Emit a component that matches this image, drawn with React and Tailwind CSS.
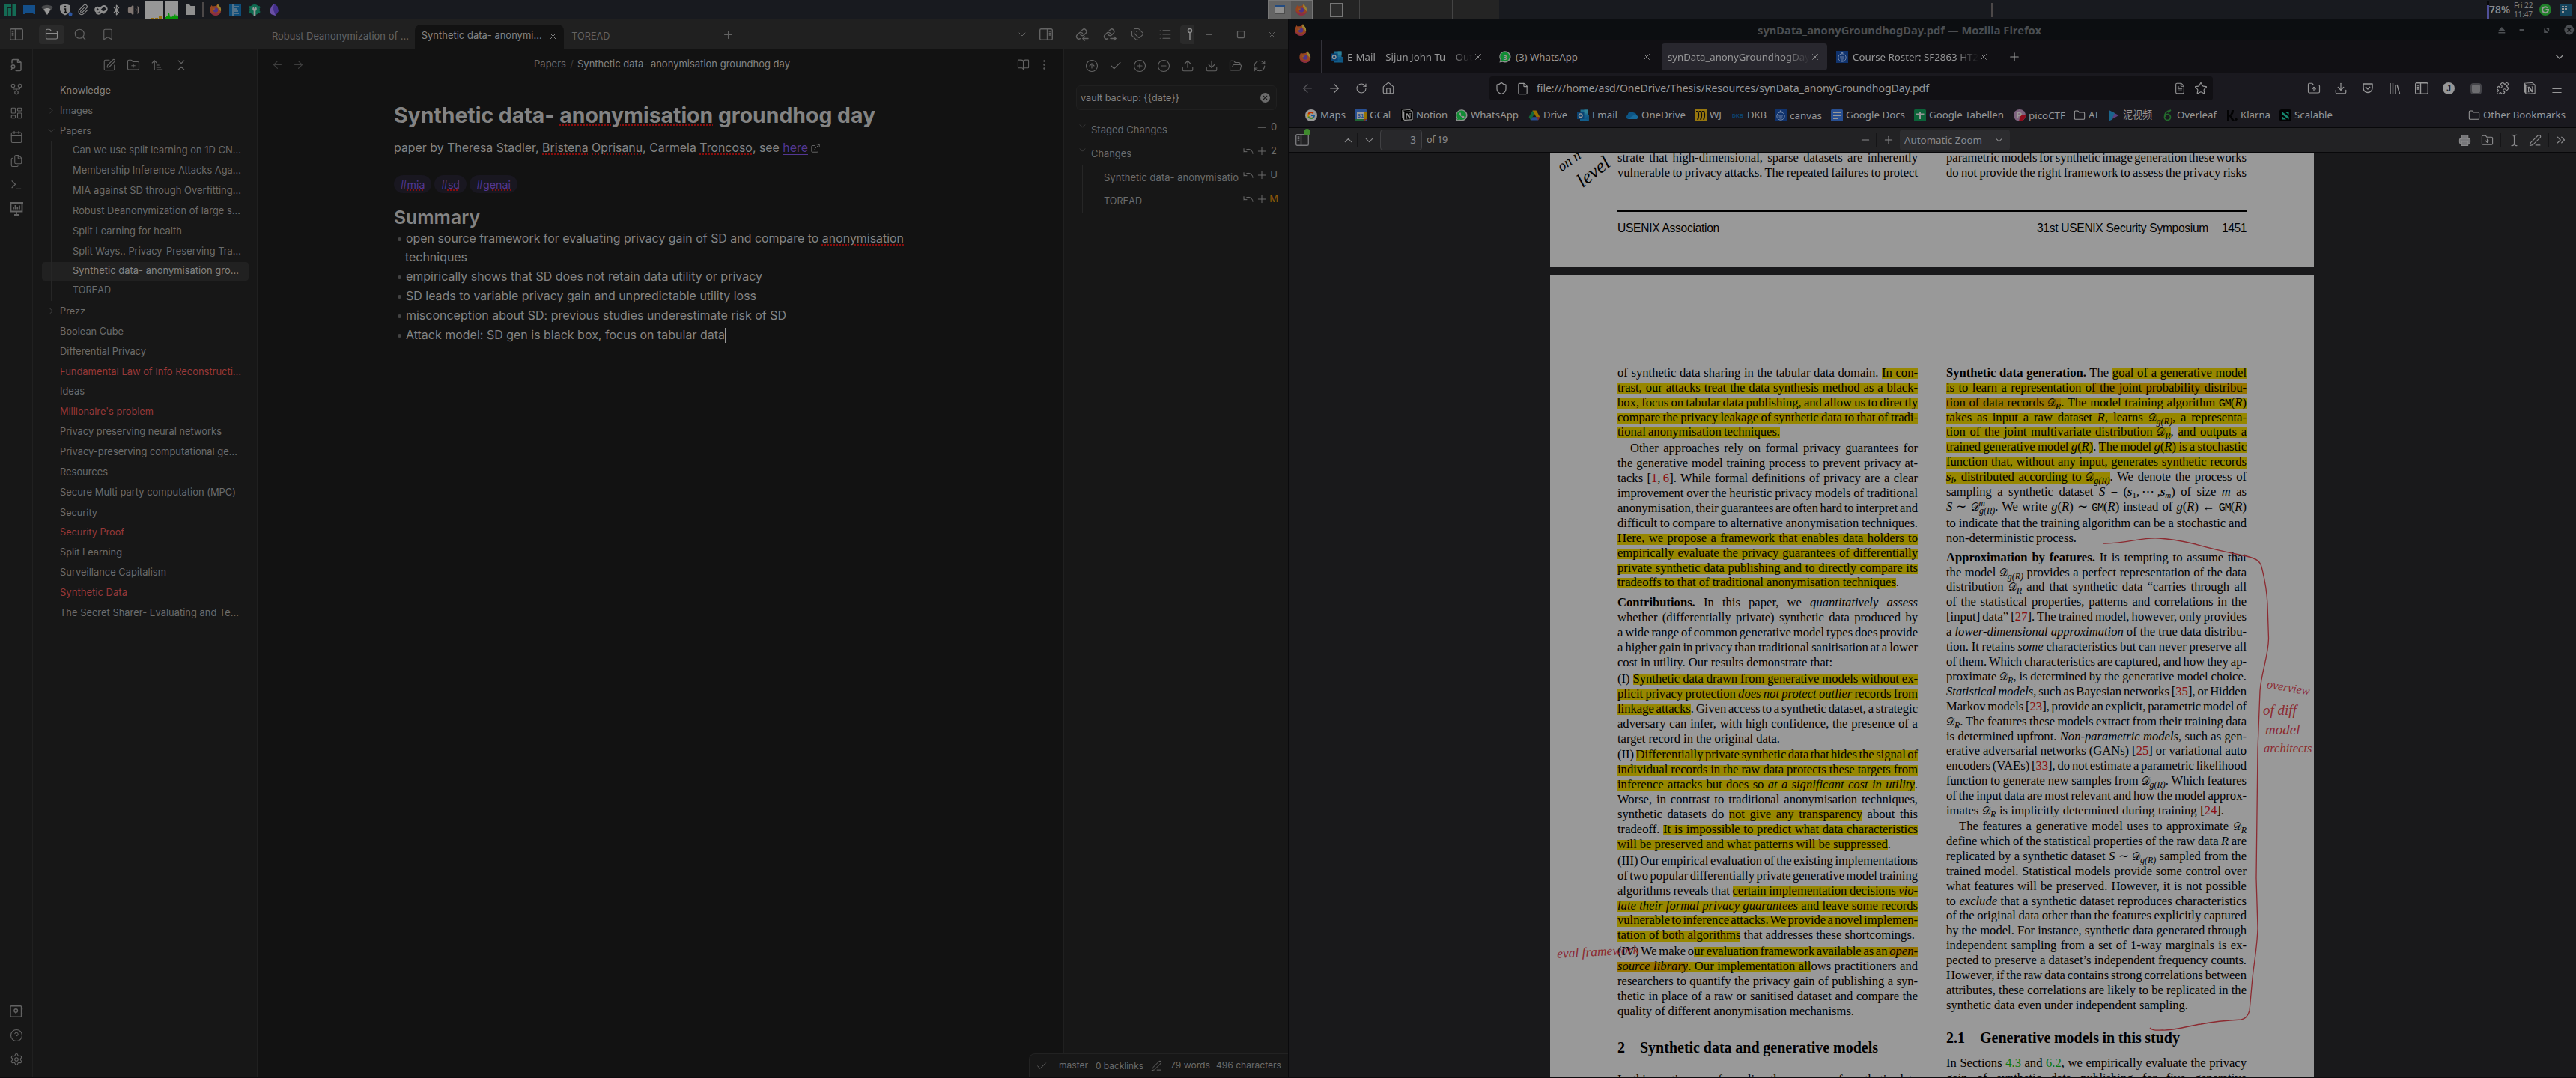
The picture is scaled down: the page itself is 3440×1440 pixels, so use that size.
import React, { useLayoutEffect, useRef } from "react";
import {
  FolderOpen, FolderClosed, Search, Bookmark, GitFork, LayoutDashboard, Calendar, Files,
  SquarePen, FolderPlus, ArrowUpNarrowWide, ChevronsDownUp, ChevronRight, ChevronDown, ChevronUp, X, Plus, Minus,
  ArrowLeft, ArrowRight, BookOpen, Tags, List, CircleArrowUp, Check, CirclePlus, CircleMinus,
  Upload, Download, RefreshCw, ExternalLink, Undo, CircleQuestionMark, Settings, PenLine,
  RotateCw, House, Shield, File, FileText, Star, Puzzle, Menu, Folder, Printer, TextCursor,
  ChevronsRight, Bluetooth, Paperclip, Volume2, Square, EllipsisVertical, Terminal,
  FolderUp, FolderDown,
} from "lucide-react";
import { FcGoogle } from "react-icons/fc";
import { SiNotion } from "react-icons/si";

/* Text set to an exact width: by size first, then by letter or word spacing. */
function Fit({ w, words = false, className = "", children }) {
  const ref = useRef(null);
  useLayoutEffect(() => {
    const el = ref.current;
    el.style.letterSpacing = "";
    el.style.wordSpacing = "";
    el.style.fontSize = "";
    if (!w) return;
    let natural = el.getBoundingClientRect().width;
    if (!words) {
      const k = Math.min(1.06, Math.max(0.94, w / natural));
      el.style.fontSize = parseFloat(getComputedStyle(el).fontSize) * k + "px";
      natural = el.getBoundingClientRect().width;
    }
    const text = el.textContent;
    const n = words ? text.split(" ").length - 1 : text.length;
    if (n > 0) el.style[words ? "wordSpacing" : "letterSpacing"] = (w - natural) / n + "px";
  }, [w, words]);
  return <span ref={ref} className={"inline-block whitespace-nowrap " + className}>{children}</span>;
}

const Slot = ({ className = "w-8", children }) => (
  <div className={"flex shrink-0 items-center justify-center " + className}>{children}</div>
);

/* ---------- small colour icons ---------- */

const FirefoxIcon = () => (
  <svg width="16" height="16" viewBox="0 0 16 16">
    <path d="M1.2 4.5 2.4 2l1.4 1.5L6 3.2 8.5 3 11 .2c.3 1.6 2 2.600 3 4.300 1.200 2 1.500 4.500.6 6.700A7.300 7.300 0 0 1 8 15.800C4 15.800.6 12.700.4 8.800.3 7.200.6 5.800 1.200 4.500Z" fill="#97441f" />
    <path d="M.5 9.500c.4 3.600 3.600 6.300 7.500 6.300 3.800 0 6.400-2.300 7.200-5.500-1.300 2-3.300 3-5.700 3C5.500 13.300 2 12 .5 9.500Z" fill="#8c2c44" />
    <path d="M11 .2c.3 1.600 2 2.600 3 4.300 1.200 2 1.500 4 .8 6.200-.6-2-1.700-3.300-3.800-5C9.600 4.300 9.800 2 11 .2Z" fill="#998433" />
    <circle cx="8" cy="8.600" r="3.200" fill="#4f3487" />
    <path d="M3.800 6.300 7.800 6.500 6 8.300 4.200 8.200Z" fill="#99591f" />
  </svg>
);
const OutlookIcon = () => (
  <svg width="16" height="16" viewBox="0 0 16 16">
    <rect x="4.500" y="0.500" width="10" height="10" fill="#1d6d8f" />
    <rect x="9.500" y="0.500" width="5" height="5" fill="#2f8098" />
    <path d="M4 8h12v7.500H4z" fill="#135e8c" /><path d="m4 8 6 4 6-4v7.500z" fill="#0f5580" />
    <rect x="0" y="3.500" width="9.500" height="9.500" fill="#0a4373" />
    <circle cx="4.700" cy="8.200" r="2.300" fill="none" stroke="#999" strokeWidth="1.400" />
  </svg>
);
const WaIcon = ({ n }) => (
  <svg width="16" height="16" viewBox="0 0 16 16">
    <path d="M.4 15.600 1.500 12A7.600 7.600 0 1 1 4.500 14.700Z" fill="#8f918f" />
    <path d="M1.900 14.200 2.700 11.700A6.300 6.300 0 1 1 5 13.500Z" fill="#118c33" />
    {n ? <text x="8" y="11.500" fontSize="9" fontWeight="700" textAnchor="middle" fill="#999" fontFamily="Noto Sans">3</text>
      : <path d="M5.500 4.500c-1 1-.5 3 1.300 4.700 1.700 1.800 3.800 2.300 4.700 1.200.3-.6.1-1-1.700-1.700l-.9.900C7.700 9.200 6.900 8.300 6.500 7.300l.7-.9C6.700 4.500 6.200 4 5.500 4.500Z" fill="#999" />}
  </svg>
);
const GIcon = () => (
  <span className="flex size-4 items-center justify-center rounded-full bg-[#989898]"><FcGoogle size={12} className="brightness-75" /></span>
);
const GCalIcon = () => (
  <svg width="16" height="16" viewBox="0 0 16 16">
    <rect width="16" height="16" rx="1" fill="#284f92" /><path d="M13 3h3v10h-3z" fill="#977102" /><path d="M0 13h13v3H1a1 1 0 0 1-1-1z" fill="#1f6533" />
    <path d="M13 13h3l-3 3z" fill="#8c2820" /><rect x="3" y="3" width="10" height="10" fill="#989898" />
    <text x="8" y="11" fontSize="8" fontWeight="700" textAnchor="middle" fill="#284f92" fontFamily="Liberation Sans">31</text>
  </svg>
);
const NotionIcon = () => (
  <span className="flex size-4 items-center justify-center bg-black"><SiNotion size={15} color="#989898" /></span>
);
const DriveIcon = () => (
  <svg width="16" height="16" viewBox="0 0 16 16">
    <path d="M5.500 1.500 8 6 3 14.500.6 10.200z" fill="#14663a" /><path d="M5.500 1.500h5L15.500 10.200h-5z" fill="#997000" />
    <path d="M5.500 10.200h10L13 14.500H3z" fill="#284f92" /><path d="M11 10.200h4.500L13 14.500z" fill="#8c2820" />
  </svg>
);
const CloudIcon = () => (
  <svg width="16" height="16" viewBox="0 0 16 16"><path d="M2 13a3 3 0 0 1-.5-5.500A5 5 0 0 1 10 4.500 4 4 0 0 1 13.500 8 2.600 2.600 0 0 1 13.500 13z" fill="#0d5585" /><path d="M2 13 10 7.500 13.500 8a2.600 2.600 0 0 1 0 5z" fill="#17699a" /></svg>
);
const WjIcon = () => (
  <svg width="16" height="16" viewBox="0 0 16 16"><rect width="16" height="16" fill="#97770f" /><path d="M2 3h2.500c1 3 1 7-.5 11M6 3h2.500c1 3 1 7-.5 11M10 3h2.500c1 3 1 7-.5 11" fill="none" stroke="#0b0b10" strokeWidth="1.800" /></svg>
);
const DkbIcon = () => (
  <svg width="16" height="16" viewBox="0 0 16 16"><text x="0" y="10.500" fontSize="7" fontWeight="700" textLength="15" fill="#0b4472" fontFamily="Liberation Sans">DKB</text></svg>
);
const KthIcon = () => (
  <svg width="16" height="16" viewBox="0 0 16 16"><rect width="16" height="16" fill="#10336e" /><circle cx="8" cy="9" r="5.200" fill="none" stroke="#7286a8" /><circle cx="8" cy="2.500" r="1.300" fill="#7286a8" /><path d="M5 8h6M5.500 10h5M6.500 12h3" stroke="#7286a8" /></svg>
);
const DocsIcon = () => (
  <svg width="16" height="16" viewBox="0 0 16 16"><rect width="16" height="16" rx="1.500" fill="#284f92" /><path d="M3 4h10M3 8h10M3 12h6" stroke="#989898" strokeWidth="1.800" /></svg>
);
const SheetsIcon = () => (
  <svg width="16" height="16" viewBox="0 0 16 16"><rect width="16" height="16" rx="1.500" fill="#0b6339" /><path d="M2.500 6.500h11M8 3v10" stroke="#989898" strokeWidth="2" /></svg>
);
const PicoIcon = () => (
  <svg width="16" height="16" viewBox="0 0 16 16"><circle cx="8" cy="8" r="8" fill="#7f6480" /><path d="M9 8h7a8 8 0 0 1-9 8z" fill="#8f0d1e" /><text x="7.500" y="12" fontSize="11" fontWeight="700" textAnchor="middle" fill="#999" fontFamily="Liberation Sans">P</text></svg>
);
const PlayIcon = () => (
  <svg width="16" height="16" viewBox="0 0 16 16"><path d="M2 1.500 14.500 8 2 15z" fill="#5a3e7d" /><path d="M2 1.500 9 5 5 14 2 15z" fill="#19658c" /></svg>
);
const LeafIcon = () => (
  <svg width="16" height="16" viewBox="0 0 16 16"><path d="M12 1C6 2 3.500 6 3.500 10.500a4 4 0 1 0 3.500-4C5 7 4 9 4 10M8 4l4-3" fill="none" stroke="#236b2c" strokeWidth="1.700" /></svg>
);
const KlarnaIcon = () => (
  <svg width="16" height="16" viewBox="0 0 16 16"><path d="M2 1h3v14H2zM8 1h3c0 4-1.500 6-3.500 7.500L12 15H8.500L4.500 8.500C7 7 8 4 8 1z" fill="#030304" /><circle cx="14" cy="13.200" r="1.700" fill="#030304" /></svg>
);
const ScalableIcon = () => (
  <svg width="16" height="16" viewBox="0 0 16 16"><rect width="16" height="16" rx="3" fill="#020203" /><path d="M3.500 3 12.500 10v3.500L3.500 6.500zM7 3h5.500v4zM3.500 9.500 9 13.500H3.500z" fill="#17876f" /></svg>
);

/* ---------- desktop panel ---------- */

const Panel = () => (
  <div className="flex h-[26px] w-full bg-[#181a1f]">
    <div className="flex h-full w-[1693px] items-center">
      <Slot className="w-[26px]">
        <svg width="16" height="16" viewBox="0 0 16 16"><path d="M0 0h10v4.500H4.500V16H0zM5.700 6H10v10H5.700zM11.500 0H16v16h-4.500z" fill="#146b55" /></svg>
      </Slot>
      <Slot className="w-[26px]">
        <svg width="16" height="16" viewBox="0 0 16 16"><path d="M0 2h16v12h-2l-2-2H4l-2 2H0z" fill="#144f8a" /></svg>
      </Slot>
      <Slot className="w-[22px]">
        <svg width="16" height="16" viewBox="0 0 16 16"><path d="M0 4.500C4.500.8 11.500.8 16 4.500L8 15z" fill="#48494b" /><path d="M3.500 7.500C6 5.500 10 5.500 12.500 7.500L8 15z" fill="#999" /></svg>
      </Slot>
      <Slot className="w-[27px]">
        <svg width="18" height="18" viewBox="0 0 18 18"><path d="M8 1 15 3.500V8c0 4-3 7-7 8.500C4 15 1 12 1 8V3.500z" fill="#8e8e8e" /><circle cx="8" cy="5" r="1.300" fill="#111" /><path d="M6.500 8H8.500v4.500M6.500 12.500h4" stroke="#111" strokeWidth="1.500" fill="none" /><circle cx="15" cy="15" r="2.500" fill="#2d56a0" /></svg>
      </Slot>
      <Slot className="w-[20px]"><Paperclip size={16} strokeWidth={1.600} color="#8e8e8e" /></Slot>
      <Slot className="w-[27px]">
        <svg width="19" height="14" viewBox="0 0 19 14"><path d="M14 10c3-.5 4-3 3-5.500C15.500 1 12.500 2 10.500 4L7 8.500C5.500 10.500 2.500 10 2.500 7S6 3 7.500 5.500C9 8 11 12 14 11M4 11.500c3 2 5 .5 7-2" fill="none" stroke="#8e8e8e" strokeWidth="2.600" strokeLinecap="round" /></svg>
      </Slot>
      <Slot className="w-[15px]"><Bluetooth size={17} strokeWidth={2.200} color="#8e8e8e" /></Slot>
      <Slot className="w-[31px]"><Volume2 size={17} strokeWidth={1.600} color="#807672" fill="#807672" /></Slot>
      <div className="flex h-6 w-6 items-end justify-end gap-px bg-[#979797]"><i className="h-px w-1 bg-[#97700d]" /><i className="h-px w-1 bg-[#97700d]" /><i className="h-[3px] w-1 bg-[#97700d]" /><i className="h-px w-px" /></div>
      <div className="ml-[2px] h-6 w-[18px] bg-[#979797]">
        <svg width="18" height="24" viewBox="0 0 18 24"><path d="M0 24v-2h2v-1h2l1-4 1-.500 1 5h3l1-2 1 2 2-4 1 4 1-3 1 3 1-2v4.500z" fill="#079a07" /></svg>
      </div>
      <Slot className="w-[32px]">
        <svg width="15" height="14" viewBox="0 0 15 14"><path d="M1 0h5l1.500 2H14v12H1z" fill="#8f8f8f" /></svg>
      </Slot>
      <div className="h-5 w-[2px] bg-[#4c4848]" />
      <Slot className="w-[32px]"><FirefoxIcon /></Slot>
      <Slot className="w-[20px]">
        <svg width="16" height="16" viewBox="0 0 16 16"><rect width="16" height="16" fill="#0e4d7a" /><path d="M5 0v16M7 4h6M7 7h3M7 10h5M7 13h6" stroke="#999" /></svg>
      </Slot>
      <Slot className="w-[32px]">
        <svg width="16" height="16" viewBox="0 0 16 16"><circle cx="8" cy="8" r="5" fill="none" stroke="#0f6a50" strokeWidth="4" /><path d="M8 0v16M1 4l14 8M15 4 1 12" stroke="#0f6a50" strokeWidth="3" /><circle cx="8" cy="7" r="2.800" fill="#999" /><path d="M6.700 8h2.600v8H6.700z" fill="#999" /><path d="M7.200 3h1.600v3.500H7.200z" fill="#0f6a50" /></svg>
      </Slot>
      <Slot className="w-[20px]">
        <svg width="12" height="16" viewBox="0 0 12 16"><path d="M6 0 10.500 3.500 12 10 8 16 2 14 0 9.500 3 3z" fill="#44308b" /><path d="M6 0 4.500 7 8 16 2 14 0 9.500 3 3z" fill="#6a50a5" /></svg>
      </Slot>
    </div>
    <div className="flex h-full w-[60px] items-center border border-[#777] bg-[#646464]">
      <Slot className="w-[30px]"><svg width="14" height="12"><rect x=".5" y=".5" width="13" height="11" fill="#8e8e8e" stroke="#4d4d4d" /><path d="M0 1h14" stroke="#234b80" strokeWidth="2" /></svg></Slot>
      <Slot className="h-full w-[28px] bg-[#555]"><FirefoxIcon /></Slot>
    </div>
    <div className="flex h-full">
      <Slot className="w-[63px] border-x border-[#444] bg-[#242424]"><div className="h-[19px] w-[17px] border border-[#777] bg-[#2c2c2c]" /></Slot>
      <div className="w-[62px] border-r border-[#444] bg-[#242424]" />
      <div className="w-[62px] border-r border-[#444] bg-[#242424]" />
      <div className="w-[62px] bg-[#242424]" />
    </div>
    <div className="flex grow items-center pl-[657px]"><div className="h-[19px] w-[2px] bg-[#4c4848]" /></div>
    <div className="flex h-full items-center pr-[5px] font-['Noto_Sans'] text-[#7d7d7d]">
      <div className="flex h-[23px] w-[3px] items-end bg-[#08080a]"><i className="h-[18px] w-[3px] bg-[#50509a]" /></div>
      <Fit w={28} className="text-[13px] font-semibold text-[#8c8c8c]">78%</Fit>
      <div className="ml-[5px] flex w-[29px] flex-col text-[10.500px] leading-[12px]"><Fit w={28}>Fri 22</Fit><Fit w={28}>11:47</Fit></div>
      <Slot className="w-[26px]"><svg width="16" height="16" viewBox="0 0 16 16"><circle cx="8" cy="8" r="8" fill="#20802a" /><path d="M11 5.500A4 4 0 1 0 12 8H8.500" fill="none" stroke="#999" strokeWidth="2" /></svg></Slot>
      <Slot className="ml-[7px] w-4"><svg width="16" height="16" viewBox="0 0 16 16"><rect width="16" height="16" fill="#15455e" /><path d="M2 3h3v2H2zM6 3h3v2H6zM2 6h3v3H2zM6 6h3v3H6zM2 10h3v3H2z" fill="#9a9a9a" /></svg></Slot>
    </div>
  </div>
);

/* ---------- notes app ---------- */

const ic = { size: 18, strokeWidth: 1.5 };
const SidebarIcon = ({ className = "" }) => (
  <svg width="18" height="16" viewBox="0 0 18 16" fill="none" stroke="currentColor" strokeWidth="1.400" className={className}><rect x=".7" y=".7" width="16.600" height="14.600" rx="1.500" /><path d="M7.500 1v14M2.700 4h2.600M2.700 6.500h2.600M2.700 9h2.600" /></svg>
);
const FileFindIcon = () => (
  <svg width="18" height="18" viewBox="0 0 24 24" fill="none" stroke="currentColor" strokeWidth="2" strokeLinecap="round" strokeLinejoin="round"><path d="M14 2v5h6M4 8V4a2 2 0 0 1 2-2h9l5 5v13a2 2 0 0 1-2 2h-7" /><circle cx="6" cy="14.500" r="3" /><path d="m3 20 1.500-3" /></svg>
);
const SlidesIcon = () => (
  <svg width="18" height="18" viewBox="0 0 18 18" fill="none" stroke="currentColor" strokeWidth="1.800"><path d="M0 1h18M1.500 1v11.500h15V1M9 12.500V17M6 17h6M5 9.500V6M7.500 9.500V4M10.300 9.500V6M13 9.500V4.500" /></svg>
);
const VaultIcon = () => (
  <svg width="18" height="16" viewBox="0 0 18 16" fill="none" stroke="currentColor" strokeWidth="1.400"><rect x="1" y=".8" width="14.500" height="14.400" rx="1" /><circle cx="8.200" cy="7" r="2.300" /><path d="M8.200 9.300v2.500M16.500 4v1.500M16.500 10.500V12" /></svg>
);
const GitPin = () => (
  <svg width="18" height="18" viewBox="0 0 18 18" fill="none" stroke="#8c8c8c" strokeWidth="1.500"><circle cx="13" cy="4" r="2.500" /><path d="M13 6.500V17" /></svg>
);
const LinkArrow = ({ out }) => (
  <svg width="18" height="18" viewBox="0 0 18 18" fill="none" stroke="currentColor" strokeWidth="1.400" strokeLinecap="round"><path d="M7 9.500a3 3 0 0 0 4.500.3l2.600-2.600a3.200 3.200 0 0 0-4.500-4.500L8.200 4M9.500 7.500A3 3 0 0 0 5 7.200L2.400 9.800a3.200 3.200 0 0 0 4 4.900M10 14.500h7" />{out ? <path d="m14.500 12 2.500 2.500-2.500 2.500" /> : <path d="M12.500 12 10 14.500l2.500 2.500" />}</svg>
);

const tree = [
  ["Knowledge", 68, "root"], ["Images", 44, "closed"], ["Papers", 42, "open"],
  ["Can we use split learning on 1D CN...", 225, "child"], ["Membership Inference Attacks Aga...", 225, "child"],
  ["MIA against SD through Overfitting...", 225, "child"], ["Robust Deanonymization of large s...", 224, "child"],
  ["Split Learning for health", 146, "child"], ["Split Ways.. Privacy-Preserving Tra...", 225, "child"],
  ["Synthetic data- anonymisation gro...", 222, "active"], ["TOREAD", 51, "child"],
  ["Prezz", 34, "closed"], ["Boolean Cube", 85, "file"], ["Differential Privacy", 115, "file"],
  ["Fundamental Law of Info Reconstructi...", 242, "red"], ["Ideas", 33, "file"], ["Millionaire's problem", 125, "red"],
  ["Privacy preserving neural networks", 216, "file"], ["Privacy-preserving computational ge...", 237, "file"],
  ["Resources", 64, "file"], ["Secure Multi party computation (MPC)", 235, "file"], ["Security", 50, "file"],
  ["Security Proof", 86, "red"], ["Split Learning", 83, "file"], ["Surveillance Capitalism", 142, "file"],
  ["Synthetic Data", 90, "red"], ["The Secret Sharer- Evaluating and Te...", 239, "file"],
];
const rowColor = { root: "text-[#838383]", red: "text-[#973838]", active: "text-[#838383]" };

function TreeRow({ label, w, kind }) {
  const child = kind === "child" || kind === "active";
  return (
    <div className="flex h-[26.85px] items-center">
      <div className={"flex h-[25px] w-[276px] items-center rounded " + (kind === "active" ? "bg-[#212121]" : "")}>
        <span className="flex h-[26.85px] w-6 items-center justify-center text-[#444]">
          {child && <i className="h-full w-px bg-[#262626]" />}
          {kind === "closed" && <ChevronRight size={13} strokeWidth={1.800} />}
          {kind === "open" && <ChevronDown size={13} strokeWidth={1.800} />}
        </span>
        <span className={child ? "w-[17px]" : "w-0"} />
        <Fit w={w} className={rowColor[kind] || "text-[#6b6b6b]"}>{label}</Fit>
      </div>
    </div>
  );
}

const Sp = ({ children }) => <span className="underline decoration-[#8a0c0c] decoration-dotted decoration-2 underline-offset-2">{children}</span>;

const Bullet = ({ w, children }) => (
  <div className="flex h-6 items-center"><i className="mr-[6px] ml-[5px] size-[5px] rounded-full bg-[#444]" /><Fit w={w}>{children}</Fit></div>
);

const GitRow = ({ label, w, open, child, tools, mark, markClass = "" }) => (
  <div className="flex h-8">
    <span className="mt-[5px] flex w-4 justify-center text-[#444]">{open && <ChevronDown size={13} strokeWidth={1.800} />}</span>
    <Fit w={w} className={"mt-[7px] " + (child ? "ml-[20px]" : "ml-1")}>{label}</Fit>
    <span className="ml-auto flex h-[25px] items-center">
      {tools > 1 && <Undo size={16} strokeWidth={1.500} className="mr-[2px]" />}
      {tools > 1 ? <Plus size={16} strokeWidth={1.500} /> : <Minus size={16} strokeWidth={2} />}
      <span className={"ml-px w-[14px] text-center " + markClass}>{mark}</span>
    </span>
  </div>
);

const Notes = () => (
  <div className="flex h-full w-[1720px] flex-col bg-[#171717] font-['Inter'] text-[13px] text-[#6b6b6b]">
    <div className="flex h-10 w-full items-center bg-[#202020] text-[#636363]">
      <Slot className="w-11"><SidebarIcon /></Slot>
      <Slot className="ml-2 h-[25px] w-[34px] rounded bg-[#2a2a2a] text-[#8c8c8c]"><FolderClosed {...ic} /></Slot>
      <Slot className="ml-1 w-[33px]"><Search {...ic} /></Slot>
      <Slot className="ml-[3px] w-[35px]"><Bookmark {...ic} /></Slot>
      <div className="ml-[202px] w-[191px] pt-[5px]"><Fit w={183}>Robust Deanonymization of ...</Fit></div>
      <div className="flex h-[33px] w-[200px] items-center self-end rounded-t-lg bg-[#121212] pb-[3px] pl-[9px] text-[#838383]">
        <Fit w={161}>Synthetic data- anonymi...</Fit><X size={15} strokeWidth={1.600} className="ml-[7px]" />
      </div>
      <div className="w-[200px] pt-[5px] pl-[10px]"><Fit w={51}>TOREAD</Fit></div>
      <div className="h-[19px] w-px bg-[#303030]" />
      <Slot className="w-[37px]"><Plus size={17} strokeWidth={1.500} /></Slot>
      <Slot className="ml-[356px] w-[36px]"><ChevronDown size={16} strokeWidth={1.500} /></Slot>
      <Slot className="w-7"><SidebarIcon className="-scale-x-100" /></Slot>
      <Slot className="ml-[15px] w-[37px]"><LinkArrow /></Slot>
      <Slot className="w-[37px]"><LinkArrow out /></Slot>
      <Slot className="w-[37px]"><Tags {...ic} /></Slot>
      <Slot className="w-[37px]"><List {...ic} /></Slot>
      <div className="ml-[2px] flex h-[25px] w-[18px] items-center overflow-hidden rounded-l bg-[#2a2a2a]"><GitPin /></div>
      <Slot className="w-[42px]"><Minus size={11} strokeWidth={2} /></Slot>
      <Slot className="w-[42px]"><Square size={12} strokeWidth={2.500} /></Slot>
      <Slot className="w-[42px]"><X size={15} strokeWidth={1.500} /></Slot>
    </div>

    <div className="relative flex h-[1372px] w-full">
      <div className="flex w-11 flex-col items-center border-r border-[#202020] pt-[5px] text-[#636363]">
        {[FileFindIcon, GitFork, LayoutDashboard, Calendar, Files, Terminal, SlidesIcon].map((I, i) => (
          <Slot key={i} className="h-8 w-8"><I {...ic} /></Slot>
        ))}
        <div className="grow" />
        {[VaultIcon, CircleQuestionMark, Settings].map((I, i) => <Slot key={i} className="h-8 w-8"><I {...ic} /></Slot>)}
        <div className="h-[7px]" />
      </div>

      <div className="w-[300px] border-r border-[#202020] pl-3">
        <div className="flex h-[41px] items-center pl-[74px] text-[#636363]">
          {[SquarePen, FolderPlus, ArrowUpNarrowWide, ChevronsDownUp].map((I, i) => <Slot key={i}><I {...ic} /></Slot>)}
        </div>
        {tree.map(([label, w, kind]) => <TreeRow key={label} label={label} w={w} kind={kind} />)}
      </div>

      <div className="w-[1077px] border-r border-[#202020] bg-[#121212] text-[#838383]">
        <div className="flex h-10 items-center text-[#3d3d3d]">
          <Slot className="ml-3 w-7"><ArrowLeft {...ic} size={17} /></Slot>
          <Slot className="w-7"><ArrowRight {...ic} size={17} /></Slot>
          <div className="ml-[301px] flex"><Fit w={43} className="text-[#6b6b6b]">Papers</Fit><span className="w-[15px] text-center">/</span><Fit w={284} className="text-[#838383]">Synthetic data- anonymisation groundhog day</Fit></div>
          <Slot className="ml-auto w-7 text-[#636363]"><BookOpen {...ic} size={17} /></Slot>
          <Slot className="mr-3 w-7 text-[#636363]"><EllipsisVertical {...ic} size={17} /></Slot>
        </div>
        <div className="ml-[182px] flex w-[700px] flex-col items-start text-[16.500px] leading-6">
          <div className="mt-[30px] text-[27.500px] leading-9 font-bold"><Fit w={643}>Synthetic data- <Sp>anonymisation</Sp> groundhog day</Fit></div>
          <div className="mt-[14px] flex items-center">
            <Fit w={553}>paper by Theresa Stadler, <Sp>Bristena</Sp> <Sp>Oprisanu</Sp>, Carmela <Sp>Troncoso</Sp>, see <span className="text-[#533793] underline underline-offset-[3px]">here</span></Fit>
            <ExternalLink size={14} strokeWidth={1.500} className="ml-[3px] text-[#6b6b6b]" />
          </div>
          <div className="mt-6 flex gap-1 text-[14px] text-[#533793]">
            {[["mia", 33, "w-[50px]"], ["sd", 25, "w-[43px]"], ["genai", 46, "w-[64px]"]].map(([t, w, c]) => (
              <span key={t} className={"flex h-6 items-center justify-center rounded-full bg-[#191720] pt-px " + c}><Fit w={w}>#<Sp>{t}</Sp></Fit></span>
            ))}
          </div>
          <div className="mt-[17px] text-[24px] leading-[30px] font-semibold"><Fit w={115}>Summary</Fit></div>
          <div className="mt-px flex flex-col gap-[2px]">
            <div>
              <Bullet w={665}>open source framework for evaluating privacy gain of SD and compare to <Sp>anonymisation</Sp></Bullet>
              <div className="ml-[15px]"><Fit w={83}>techniques</Fit></div>
            </div>
            <Bullet w={476}>empirically shows that SD does not retain data utility or privacy</Bullet>
            <Bullet w={468}>SD leads to variable privacy gain and unpredictable utility loss</Bullet>
            <Bullet w={508}>misconception about SD: previous studies underestimate risk of SD</Bullet>
            <div className="flex items-center"><Bullet w={426}>Attack model: SD gen is black box, focus on tabular data</Bullet><i className="h-5 w-px bg-[#999]" /></div>
          </div>
        </div>
      </div>

      <div className="w-[299px] pr-3 pl-4">
        <div className="flex h-[44px] items-center pl-[5px] text-[#636363]">
          {[CircleArrowUp, Check, CirclePlus, CircleMinus, Upload, Download, FolderOpen, RefreshCw].map((I, i) => <Slot key={i}><I {...ic} /></Slot>)}
        </div>
        <div className="mt-1 flex h-[33px] w-[268px] items-center rounded-md border border-[#202020] bg-[#191919] px-[5px] text-[#838383]">
          <Fit w={132}>vault backup: {"{{date}}"}</Fit>
          <span className="mr-[3px] ml-auto flex size-[13px] items-center justify-center rounded-full bg-[#6b6b6b] text-[#191919]"><X size={9} strokeWidth={3} /></span>
        </div>
        <div className="mt-[10px]">
          <GitRow label="Staged Changes" w={102} open tools={1} mark="0" />
          <GitRow label="Changes" w={54} open tools={2} mark="2" />
          <div className="ml-2 border-l border-[#262626]">
            <div className="-ml-2"><GitRow label="Synthetic data- anonymisatio" w={180} child tools={2} mark="U" />
            <GitRow label="TOREAD" w={51} child tools={2} mark="M" markClass="text-[#8f5a08]" /></div>
          </div>
        </div>
      </div>

      <div className="absolute right-0 bottom-0 flex h-[31px] w-[346px] items-center rounded-tl-lg border-t border-l border-[#222] bg-[#171717] pt-px text-[12px] text-[#6b6b6b]">
        <Check size={16} strokeWidth={1.500} className="ml-2" />
        <Fit w={39} className="ml-[15px]">master</Fit>
        <Fit w={64} className="ml-[10px]">0 backlinks</Fit>
        <PenLine size={15} strokeWidth={1.500} className="ml-[10px]" />
        <Fit w={53} className="ml-[11px]">79 words</Fit>
        <Fit w={87} className="ml-[8px]">496 characters</Fit>
      </div>
    </div>
    <div className="h-[2px] w-full bg-[#0d0b0e]" />
  </div>
);

/* ---------- paper ---------- */

const H = ({ children }) => <span className="bg-[linear-gradient(transparent_4px,#978700_4px,#978700_18.5px,transparent_18.5px)] pb-px">{children}</span>;
const O = ({ children }) => <span className="bg-[linear-gradient(transparent_4px,#967400_4px,#967400_18.5px,transparent_18.5px)] pb-px">{children}</span>;
const I = ({ children }) => <i>{children}</i>;
const B = ({ children }) => <b>{children}</b>;
const R = ({ children }) => <span className="text-[#8b0c10]">{children}</span>;
const G = ({ children }) => <span className="text-[#0b780b]">{children}</span>;
const GM = () => <span><span className="font-['Liberation_Mono'] text-[15px] tracking-[-1px]">GM</span>(<i>R</i>)</span>;
const D = ({ g, p }) => (
  <span><span className="text-[14px] leading-none">𝒟</span>{p && <sup className="-mr-[8px] text-[11.600px] leading-none italic">m</sup>}<span className="align-[-4px] text-[12px] leading-none italic">{g ? "g(R)" : "R"}</span></span>
);
const L = ({ w = 401, children }) => <div className="h-[19.92px] leading-[19.92px] whitespace-nowrap"><Fit w={w} words>{children}</Fit></div>;

const ColumnOne = () => (
  <div className="w-[401px]">
    <L>of synthetic data sharing in the tabular data domain. <H>In con-</H></L>
    <L><H>trast, our attacks treat the data synthesis method as a black-</H></L>
    <L><H>box, focus on tabular data publishing, and allow us to directly</H></L>
    <L><H>compare the privacy leakage of synthetic data to that of tradi-</H></L>
    <L w={217}><H>tional anonymisation techniques.</H></L>
    <div className="mt-[2px] pl-[17px]"><L w={384}>Other approaches rely on formal privacy guarantees for</L></div>
    <L>the generative model training process to prevent privacy at-</L>
    <L>tacks [<R>1</R>,{"\u2009"}<R>6</R>]. While formal definitions of privacy are a clear</L>
    <L>improvement over the heuristic privacy models of traditional</L>
    <L>anonymisation, their guarantees are often hard to interpret and</L>
    <L>difficult to compare to alternative anonymisation techniques.</L>
    <L><H>Here, we propose a framework that enables data holders to</H></L>
    <L><H>empirically evaluate the privacy guarantees of differentially</H></L>
    <L><H>private synthetic data publishing and to directly compare its</H></L>
    <L w={376}><H>tradeoffs to that of traditional anonymisation techniques</H>.</L>
    <div className="mt-[7px]"><L><B>Contributions.</B> In this paper, we <I>quantitatively assess</I></L></div>
    <L>whether (differentially private) synthetic data produced by</L>
    <L>a wide range of common generative model types does provide</L>
    <L>a higher gain in privacy than traditional sanitisation at a lower</L>
    <L w={287}>cost in utility. Our results demonstrate that:</L>
    <div className="mt-[2px]"><L>(I) <H>Synthetic data drawn from generative models without ex-</H></L></div>
    <L><H>plicit privacy protection <I>does not protect outlier</I> records from</H></L>
    <L><H>linkage attacks</H>. Given access to a synthetic dataset, a strategic</L>
    <L>adversary can infer, with high confidence, the presence of a</L>
    <L w={217}>target record in the original data.</L>
    <div className="mt-[2px]"><L>(II) <H>Differentially private synthetic data that hides the signal of</H></L></div>
    <L><H>individual records in the raw data protects these targets from</H></L>
    <L><H>inference attacks but does so <I>at a significant cost in utility</I></H>.</L>
    <L>Worse, in contrast to traditional anonymisation techniques,</L>
    <L>synthetic datasets do <H>not give any transparency</H> about this</L>
    <L>tradeoff. <H>It is impossible to predict what data characteristics</H></L>
    <L w={365}><H>will be preserved and what patterns will be suppressed</H>.</L>
    <div className="mt-[2px]"><L>(III) Our empirical evaluation of the existing implementations</L></div>
    <L>of two popular differentially private generative model training</L>
    <L>algorithms reveals that <H>certain implementation decisions <I>vio-</I></H></L>
    <L><H><I>late their formal privacy guarantees</I> and leave some records</H></L>
    <L><H>vulnerable to inference attacks. We provide a novel implemen-</H></L>
    <L w={397}><H>tation of both algorithms</H> that addresses these shortcomings.</L>
    <div className="mt-[2px]"><L>(IV) We make o<H>ur evaluation framework available as an </H><O><I>open-</I></O></L></div>
    <L><O><I>source library</I></O><H>. Our implementation all</H>ows practitioners and</L>
    <L>researchers to quantify the privacy gain of publishing a syn-</L>
    <L>thetic in place of a raw or sanitised dataset and compare the</L>
    <L w={316}>quality of different anonymisation mechanisms.</L>
    <h2 className="mt-[26px] text-[20px] leading-6 font-bold"><span className="mr-5">2</span><Fit words w={318}>Synthetic data and generative models</Fit></h2>
    <div className="mt-[21px]"><L>In this section, we formalise the process of synthetic data</L></div>
  </div>
);

const ColumnTwo = () => (
  <div className="w-[401px]">
    <L><B>Synthetic data generation.</B> The <H>goal of a generative model</H></L>
    <L><H>is to learn a representation o</H><O>f the joint probability distribu-</O></L>
    <L><O>tion of data records <D /></O><H>. The model training algorithm <GM /></H></L>
    <L><H>takes as input a raw dataset <I>R</I>, learns <D g />, a representa-</H></L>
    <L><H>tion of the joint multivariate distribution <D /></H>, <H>and outputs a</H></L>
    <L><H>trained generative model <I>g</I>(<I>R</I>)</H>. <H>The model <I>g</I>(<I>R</I>) is a stochastic</H></L>
    <L><H>function that, without any input, generates synthetic records</H></L>
    <L><H><B><I>s</I></B><span className="align-[-3px] text-[12px] leading-none italic">i</span>, distributed according to <D g /></H>. We denote the process of</L>
    <L>sampling a synthetic dataset <I>S</I> = (<B><I>s</I></B><span className="align-[-3px] text-[11px] leading-none">1</span>,{"\u2009"}⋯{"\u2009"},<B><I>s</I></B><span className="align-[-3px] text-[11px] leading-none italic">m</span>) of size <I>m</I> as</L>
    <L><I>S</I> ∼ <D g p />. We write <I>g</I>(<I>R</I>) ∼ <GM /> instead of <I>g</I>(<I>R</I>) ← <GM /></L>
    <div className="mt-[2px]"><L>to indicate that the training algorithm can be a stochastic and</L></div>
    <L w={174}>non-deterministic process.</L>
    <div className="mt-[6px]"><L><B>Approximation by features.</B> It is tempting to assume that</L></div>
    <L>the model <D g /> provides a perfect representation of the data</L>
    <L>distribution <D /> and that synthetic data “carries through all</L>
    <L>of the statistical properties, patterns and correlations in the</L>
    <L>[input] data” [<R>27</R>]. The trained model, however, only provides</L>
    <L>a <I>lower-dimensional approximation</I> of the true data distribu-</L>
    <L>tion. It retains <I>some</I> characteristics but can never preserve all</L>
    <L>of them. Which characteristics are captured, and how they ap-</L>
    <L>proximate <D />, is determined by the generative model choice.</L>
    <L><I>Statistical models</I>, such as Bayesian networks [<R>35</R>], or Hidden</L>
    <L>Markov models [<R>23</R>], provide an explicit, parametric model of</L>
    <L><D />. The features these models extract from their training data</L>
    <L>is determined upfront. <I>Non-parametric models</I>, such as gen-</L>
    <L>erative adversarial networks (GANs) [<R>25</R>] or variational auto</L>
    <L>encoders (VAEs) [<R>33</R>], do not estimate a parametric likelihood</L>
    <L>function to generate new samples from <D g />. Which features</L>
    <L>of the input data are most relevant and how the model approx-</L>
    <L w={371}>imates <D /> is implicitly determined during training [<R>24</R>].</L>
    <div className="mt-px pl-[17px]"><L w={384}>The features a generative model uses to approximate <D /></L></div>
    <L>define which of the statistical properties of the raw data <I>R</I> are</L>
    <L>replicated by a synthetic dataset <I>S</I> ∼ <D g /> sampled from the</L>
    <L>trained model. Statistical models provide some control over</L>
    <L>what features will be preserved. However, it is not possible</L>
    <L>to <I>exclude</I> that a synthetic dataset reproduces characteristics</L>
    <L>of the original data other than the features explicitly captured</L>
    <L>by the model. For instance, synthetic data generated through</L>
    <L>independent sampling from a set of 1-way marginals is ex-</L>
    <L>pected to preserve a dataset’s independent frequency counts.</L>
    <L>However, if the raw data contains strong correlations between</L>
    <L>attributes, these correlations are likely to be replicated in the</L>
    <L w={323}>synthetic data even under independent sampling.</L>
    <h2 className="mt-[21px] text-[20px] leading-6 font-bold"><span className="mr-5">2.1</span><Fit words w={267}>Generative models in this study</Fit></h2>
    <div className="mt-[12px]"><L>In Sections <G>4.3</G> and <G>6.2</G>, we empirically evaluate the privacy</L></div>
    <L>gain of synthetic data publishing for five generative</L>
  </div>
);

const Note = ({ className, children }) => <span className={"absolute font-['Liberation_Serif'] whitespace-nowrap text-[#8c2a30] italic " + className}>{children}</span>;

const Paper = () => (
  <div className="flex h-[1234px] flex-col items-center overflow-hidden bg-[#19191b] pr-[2px] font-['Liberation_Serif'] text-[16.600px] text-black">
    <div className="relative h-[152px] w-[1020px] shrink-0 overflow-hidden bg-[#999]">
      <div className="-mt-[3px] flex justify-between px-[90px]">
        <div className="w-[401px]"><L>strate that high-dimensional, sparse datasets are inherently</L><L>vulnerable to privacy attacks. The repeated failures to protect</L></div>
        <div className="w-[401px]"><L>parametric models for synthetic image generation these works</L><L>do not provide the right framework to assess the privacy risks</L></div>
      </div>
      <div className="mx-[90px] mt-10 h-[2px] bg-black" />
      <div className="mx-[90px] mt-[10px] flex items-center font-['Liberation_Sans'] leading-6"><Fit w={136}>USENIX Association</Fit><Fit w={229} className="ml-auto">31st USENIX Security Symposium</Fit><Fit w={33} className="ml-[18px]">1451</Fit></div>
      <Note className="-top-[3px] left-[9px] -rotate-[35deg] text-[19px] text-black!">on n</Note>
      <Note className="top-[6px] left-[33px] -rotate-[38deg] text-[26px] text-black!">level</Note>
    </div>
    <div className="relative mt-[11px] h-[1080px] w-[1020px] shrink-0 bg-[#999] pt-[120.800px]">
      <div className="flex justify-between px-[90px]"><ColumnOne /><ColumnTwo /></div>
      <svg className="absolute top-0 left-0" width="1020" height="1071" viewBox="0 0 1020 1071" fill="none" stroke="#8c2a30" strokeWidth="1.300">
        <path d="M738 359C770 360 790 350 813 352C832 353 845 356 862 360C890 368 915 373 930 376C942 379 948 382 950 390C954 405 957 420 958 440L959.500 486C959 510 950 530 948 556L945 633L943 806L945 873C944 900 940 920 938 939L934 983C932 990 928 994 923 995C905 996 885 998 869 1001C850 1004 830 1010 818 1009C810 1009 805 1010 801 1006" />
      </svg>
      <Note className="top-[540px] left-[957px] rotate-[10deg] text-[16px]">overview</Note>
      <Note className="top-[568px] left-[952px] text-[19px]">of diff</Note>
      <Note className="top-[594px] left-[955px] text-[19px]">model</Note>
      <Note className="top-[621px] left-[953px] text-[16.500px]">architects</Note>
      <Note className="top-[891px] left-[9px] -rotate-3 text-[17.500px]">eval framework</Note>
    </div>
  </div>
);

/* ---------- browser ---------- */

const bookmarks = [
  [GIcon, "Maps", 34, "w-[66px]"], [GCalIcon, "GCal", 28, "w-[62px]"], [NotionIcon, "Notion", 42, "w-[73px]"],
  [WaIcon, "WhatsApp", 64, "w-[97px]"], [DriveIcon, "Drive", 32, "w-[65px]"], [OutlookIcon, "Email", 34, "w-[66px]"],
  [CloudIcon, "OneDrive", 59, "w-[91px]"], [WjIcon, "WJ", 16, "w-[50px]"], [DkbIcon, "DKB", 26, "w-[57px]"],
  [KthIcon, "canvas", 43, "w-[75px]"], [DocsIcon, "Google Docs", 79, "w-[111px]"], [SheetsIcon, "Google Tabellen", 100, "w-[133px]"],
  [PicoIcon, "picoCTF", 49, "w-[80px]"], [() => <Folder size={16} strokeWidth={1.600} />, "AI", 13, "w-[46px]"], [PlayIcon, "泥视频", 39, "w-[72px]"],
  [LeafIcon, "Overleaf", 53, "w-[85px]"], [KlarnaIcon, "Klarna", 40, "w-[72px]"], [ScalableIcon, "Scalable", 51, "w-[80px]"],
];

const Tab = ({ icon, label, w, active, fade }) => (
  <div className="flex h-full w-[225px] shrink-0 items-center px-px py-1">
    <div className={"flex h-[36px] w-[221px] items-center rounded pl-[8px] " + (active ? "bg-[#28272e]" : "")}>
      {icon}
      <div className={"overflow-hidden " + (icon ? "ml-[6px] w-[168px]" : "w-[190px]") + (fade ? " [mask-image:linear-gradient(to_right,black_82%,transparent)]" : "")}><Fit w={w}>{label}</Fit></div>
      <X size={14} strokeWidth={1.500} className="mt-[-1px] shrink-0" />
    </div>
  </div>
);

const nic = { size: 18, strokeWidth: 1.6 };
const Browser = () => (
  <div className="flex h-full w-[1720px] flex-col border-l-2 border-[#0a0a0c] bg-[#111014] font-['Noto_Sans','Noto_Sans_CJK_SC',sans-serif] text-[14px] text-[#979798]">
    <div className="flex h-[28px] items-center bg-[#0c0e11] text-[#4b4e52]">
      <Slot className="w-[30px]"><FirefoxIcon /></Slot>
      <div className="ml-[595px] w-[996px] text-[14.500px] font-bold"><Fit w={379}>synData_anonyGroundhogDay.pdf — Mozilla Firefox</Fit></div>
      <svg width="110" height="14" viewBox="0 0 110 14" fill="#4b4e52"><path d="m10 3 4.500 5h-9zM5.500 10h9v1.500h-9zM34 6h6v2h-6zM67 5v6l6-0zM69 4h5v5z" /><circle cx="101" cy="7" r="6.500" /><path d="m98.500 4.500 5 5m0-5-5 5" stroke="#0c0e11" strokeWidth="1.500" /></svg>
    </div>
    <div className="flex h-[44px] items-center">
      <div className="flex h-full w-[43px] items-center border-r border-[#33323a] pl-[13px]"><FirefoxIcon /></div>
      <div className="ml-[3px] flex h-full">
        <Tab icon={<OutlookIcon />} label="E-Mail – Sijun John Tu – Out" w={168} fade />
        <Tab icon={<WaIcon n />} label="(3) WhatsApp" w={83} />
        <Tab label="synData_anonyGroundhogDay" w={190} active fade />
        <Tab icon={<KthIcon />} label="Course Roster: SF2863 HT2" w={168} fade />
      </div>
      <Slot className="ml-[7px] w-[30px]"><Plus {...nic} /></Slot>
      <Slot className="mr-[7px] ml-auto w-[30px]"><ChevronDown {...nic} /></Slot>
    </div>
    <div className="flex h-[40px] items-center bg-[#1a191f]">
      <div className="flex w-[267px] pl-[6px]">
        <Slot className="w-9 text-[#55545a]"><ArrowLeft {...nic} /></Slot><Slot className="w-9"><ArrowRight {...nic} /></Slot><Slot className="w-9"><RotateCw {...nic} size={16} /></Slot><Slot className="w-9"><House {...nic} /></Slot>
      </div>
      <div className="flex h-8 w-[966px] items-center rounded bg-[#111014]">
        <Slot className="ml-[2px] w-7"><Shield {...nic} /></Slot><Slot className="w-7"><File {...nic} size={17} /></Slot>
        <Fit w={524} className="ml-[5px] text-[15px]">file:///home/asd/OneDrive/Thesis/Resources/synData_anonyGroundhogDay.pdf</Fit>
        <Slot className="ml-auto w-7"><FileText {...nic} size={16} /></Slot><Slot className="mr-[2px] w-7"><Star {...nic} /></Slot>
      </div>
      <div className="ml-auto flex pr-[8px]">
        <Slot className="w-9"><FolderUp {...nic} /></Slot>
        <Slot className="w-9"><Download {...nic} /></Slot>
        <Slot className="w-9"><svg width="16" height="16" viewBox="0 0 16 16" fill="none" stroke="#979798" strokeWidth="1.500"><path d="M2 2h12v5.500a6 6 0 0 1-12 0zM5 6l3 3 3-3" strokeLinejoin="round" /></svg></Slot>
        <Slot className="w-9"><svg width="16" height="16" viewBox="0 0 16 16" fill="none" stroke="#979798" strokeWidth="1.400"><path d="M2 1v14M5.500 1v14M9 3v12M11 3l3.500 12" /></svg></Slot>
        <Slot className="w-9"><SidebarIcon /></Slot>
        <Slot className="w-9"><span className="flex size-4 items-center justify-center rounded-full bg-[#979798] font-['Liberation_Sans'] text-[10px] font-bold text-[#1a191f]">J</span></Slot>
        <Slot className="w-9"><span className="size-[15px] rounded-sm border-2 border-[#444449] bg-[#6d6d70]" /></Slot>
        <Slot className="w-9"><Puzzle {...nic} /></Slot>
        <Slot className="w-9"><SiNotion size={16} /></Slot>
        <Slot className="w-9"><Menu {...nic} size={17} /></Slot>
      </div>
    </div>
    <div className="flex h-[32px] items-center bg-[#1a191f]">
      <div className="mr-[9px] ml-[11px] h-6 w-px bg-[#55545a]" />
      {bookmarks.map(([Icon, label, w, c]) => (
        <div key={label} className={"flex shrink-0 items-center gap-1 " + c}><Icon /><Fit w={w}>{label}</Fit></div>
      ))}
      <div className="mr-[14px] ml-auto flex items-center gap-1"><Folder size={16} strokeWidth={1.600} /><Fit w={110}>Other Bookmarks</Fit></div>
    </div>
    <div className="flex h-[34px] items-center border-y border-[#08080a] bg-[#222224] text-[13.500px] text-[#8a8a8c]">
      <div className="relative ml-[8px] w-[59px] text-[#77777a]"><SidebarIcon /><i className="absolute -top-[7px] left-[11px] size-[9px] rounded-full bg-[#3f8a2d]" /></div>
      <Slot className="w-[23px]"><ChevronUp {...nic} size={17} /></Slot>
      <div className="h-5 w-px bg-[#151517]" />
      <Slot className="w-[30px]"><ChevronDown {...nic} size={17} /></Slot>
      <div className="flex h-[28px] w-[56px] items-center justify-end rounded-sm border border-[#404043] bg-[#28282b] pr-[7px]">3</div>
      <Fit w={28} className="ml-[6px]">of 19</Fit>
      <Slot className="ml-[544px] w-[28px]"><Minus {...nic} size={16} /></Slot>
      <div className="h-5 w-px bg-[#151517]" />
      <Slot className="w-[31px]"><Plus {...nic} size={16} /></Slot>
      <div className="flex h-[28px] w-[147px] items-center rounded-sm bg-[#2c2c2f] pl-[6px]"><Fit w={104}>Automatic Zoom</Fit><ChevronDown size={13} strokeWidth={2} className="ml-[16px]" /></div>
      <div className="mr-[4px] ml-auto flex items-center">
        <Slot className="w-[30px]"><Printer size={17} fill="#77777a" strokeWidth={1.500} /></Slot><Slot className="w-[30px]"><FolderDown {...nic} size={17} /></Slot>
        <div className="ml-[3px] h-5 w-px bg-[#151517]" />
        <Slot className="ml-[2px] w-[30px]"><TextCursor {...nic} size={17} /></Slot><Slot className="w-[26px]"><PenLine {...nic} size={17} /></Slot>
        <div className="ml-[5px] h-5 w-px bg-[#151517]" />
        <Slot className="w-[32px]"><ChevronsRight {...nic} /></Slot>
      </div>
    </div>
    <Paper />
    <div className="h-[2px] bg-[#0d0b0e]" />
  </div>
);

export default function App() {
  return (
    <div className="flex h-[1440px] w-[3440px] flex-col overflow-hidden bg-[#0d0b0e]">
      <Panel />
      <div className="flex h-[1414px] w-full"><Notes /><Browser /></div>
    </div>
  );
}
